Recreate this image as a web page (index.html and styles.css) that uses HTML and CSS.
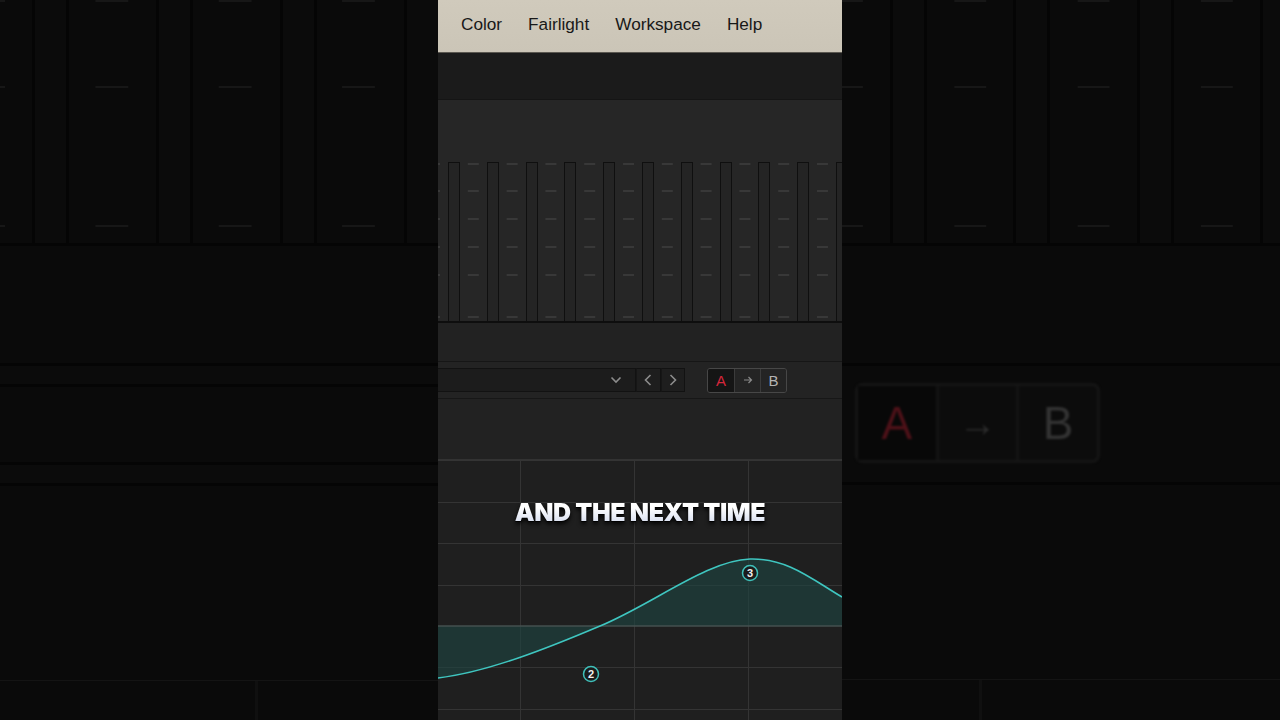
FILE: index.html
```html
<!DOCTYPE html>
<html lang="en">
<head>
    <meta charset="UTF-8">
    <meta name="viewport" content="width=device-width, initial-scale=1.0">
    <title>Fairlight EQ</title>
    <link rel="stylesheet" href="styles.css">
</head>
<body>
    <div class="screen">
        <!-- blurred backdrop, left -->
        <div class="side side-left">
            <div class="side-strips">
                <div class="big-strip"></div>
                <div class="big-strip"></div>
                <div class="big-strip"></div>
                <div class="big-strip"></div>
            </div>
            <div class="band band-tall"></div>
            <div class="band band-thin"></div>
            <div class="band band-mid"></div>
            <div class="band band-thin"></div>
            <div class="band band-rest"></div>
            <div class="side-foot"><div class="foot-cell"></div></div>
        </div>

        <div class="app">
            <nav class="menubar">
                <span>Color</span>
                <span>Fairlight</span>
                <span>Workspace</span>
                <span>Help</span>
            </nav>
            <div class="topstrip"></div>

            <div class="mixer">
                <div class="faders">
                    <div class="fader"></div>
                    <div class="fader"></div>
                    <div class="fader"></div>
                    <div class="fader"></div>
                    <div class="fader"></div>
                    <div class="fader"></div>
                    <div class="fader"></div>
                    <div class="fader"></div>
                    <div class="fader"></div>
                    <div class="fader"></div>
                    <div class="fader"></div>
                </div>
            </div>
            <div class="gap-row"></div>

            <div class="toolbar">
                <div class="preset">
                    <svg width="12" height="8" viewBox="0 0 12 8"><path d="M1.5 1.5 L6 6 L10.5 1.5" fill="none" stroke="#8c8c8c" stroke-width="1.6"/></svg>
                </div>
                <div class="navbtn">
                    <svg width="8" height="12" viewBox="0 0 8 12"><path d="M6.5 1 L1.5 6 L6.5 11" fill="none" stroke="#8c8c8c" stroke-width="1.6"/></svg>
                </div>
                <div class="navbtn">
                    <svg width="8" height="12" viewBox="0 0 8 12"><path d="M1.5 1 L6.5 6 L1.5 11" fill="none" stroke="#8c8c8c" stroke-width="1.6"/></svg>
                </div>
                <div class="ab">
                    <span class="ab-a">A</span>
                    <span class="ab-arrow">
                        <svg width="10" height="10" viewBox="0 0 10 10"><path d="M1 5 H8.5 M5.5 2 L8.5 5 L5.5 8" fill="none" stroke="#8a8a8a" stroke-width="1.2"/></svg>
                    </span>
                    <span class="ab-b">B</span>
                </div>
            </div>
            <div class="gap-row tall"></div>

            <div class="graph">
                <svg class="eq" width="404" height="260" viewBox="0 0 404 260">
                    <g stroke="#343434" stroke-width="1">
                        <line x1="0" y1="0.5" x2="404" y2="0.5"/>
                        <line x1="0" y1="42.5" x2="404" y2="42.5"/>
                        <line x1="0" y1="83.5" x2="404" y2="83.5"/>
                        <line x1="0" y1="125.5" x2="404" y2="125.5"/>
                        <line x1="0" y1="207.5" x2="404" y2="207.5"/>
                        <line x1="0" y1="249.5" x2="404" y2="249.5"/>
                        <line x1="82.5" y1="0" x2="82.5" y2="260"/>
                        <line x1="196.5" y1="0" x2="196.5" y2="260"/>
                        <line x1="310.5" y1="0" x2="310.5" y2="260"/>
                    </g>
                    <path d="M0 166 L0 218 C50 212 110 188 162 166 C215 144 270 100 312 99 C350 98 375 120 404 137 L404 166 Z" fill="#1e4643" fill-opacity="0.6"/>
                    <line x1="0" y1="166" x2="404" y2="166" stroke="#44504f" stroke-width="1.5"/>
                    <path d="M0 218 C50 212 110 188 162 166 C215 144 270 100 312 99 C350 98 375 120 404 137" fill="none" stroke="#3fc6c0" stroke-width="1.6"/>
                    <g class="node">
                        <circle cx="312" cy="113" r="7.5" fill="#1b1b1b" stroke="#3fc0ba" stroke-width="1.5"/>
                        <text x="312" y="117">3</text>
                    </g>
                    <g class="node">
                        <circle cx="153" cy="214" r="7.5" fill="#1b1b1b" stroke="#3fc0ba" stroke-width="1.5"/>
                        <text x="153" y="218">2</text>
                    </g>
                </svg>
                <div class="caption">AND THE NEXT TIME</div>
            </div>
        </div>

        <!-- blurred backdrop, right -->
        <div class="side side-right">
            <div class="side-strips">
                <div class="big-strip"></div>
                <div class="big-strip"></div>
                <div class="big-strip"></div>
                <div class="big-strip"></div>
            </div>
            <div class="band band-tall"></div>
            <div class="band band-ab">
                <div class="ghost-ab">
                    <span class="ghost-a">A</span>
                    <span class="ghost-arrow">→</span>
                    <span class="ghost-b">B</span>
                </div>
            </div>
            <div class="band band-rest"></div>
            <div class="side-foot"><div class="foot-cell"></div></div>
        </div>
    </div>
</body>
</html>
```

FILE: styles.css
```css
* {
    margin: 0;
    padding: 0;
    box-sizing: border-box;
}

body {
    background: #0a0a0a;
    font-family: 'Liberation Sans', Arial, sans-serif;
}

.screen {
    display: flex;
    width: 1280px;
    height: 720px;
    overflow: hidden;
    background: #0a0a0a;
}

/* backdrop sides */
.side {
    width: 438px;
    flex: none;
    display: flex;
    flex-direction: column;
    background: #0a0a0a;
    filter: blur(0.7px);
}

.side-strips {
    display: flex;
    gap: 87px;
    height: 246px;
    padding-left: 32px;
    border-bottom: 3px solid #050505;
    background-image:
        linear-gradient(to right, #171717 0 5px, transparent 5px 95px, #171717 95px 123.3px),
        linear-gradient(to right, #171717 0 5px, transparent 5px 95px, #171717 95px 123.3px),
        linear-gradient(to right, #171717 0 5px, transparent 5px 95px, #171717 95px 123.3px);
    background-size: 123.3px 2px;
    background-repeat: repeat-x;
    background-position: 0 0, 0 86px, 0 225px;
}

.side-right .side-strips {
    padding-left: 48px;
    gap: 86.3px;
    background-image:
        linear-gradient(to right, #171717 0 21px, transparent 21px 112px, #171717 112px 123.3px),
        linear-gradient(to right, #171717 0 21px, transparent 21px 112px, #171717 112px 123.3px),
        linear-gradient(to right, #171717 0 21px, transparent 21px 112px, #171717 112px 123.3px);
}

.big-strip {
    width: 37px;
    flex: none;
    border-left: 3px solid #050505;
    border-right: 3px solid #050505;
    background: #0b0b0b;
}

.band {
    border-bottom: 3px solid #050505;
}

.band-tall {
    height: 120px;
}

.band-thin {
    height: 21px;
    background: #0b0b0b;
}

.band-mid {
    height: 78px;
}

.band-rest {
    height: 195px;
    border-bottom: 1px solid #141414;
}

.band-ab {
    height: 119px;
    padding: 17px 0 0 13px;
}

.side-foot {
    flex: 1;
    background: #0a0a0a;
}

.side-left .foot-cell {
    width: 258px;
    height: 100%;
    border-right: 3px solid #101010;
}

.side-right .foot-cell {
    width: 140px;
    height: 100%;
    border-right: 3px solid #101010;
}

.ghost-ab {
    display: flex;
    width: 245px;
    height: 80px;
    border: 3px solid #151515;
    border-radius: 8px;
    background: #0c0c0c;
    filter: blur(1.2px);
}

.ghost-ab span {
    flex: 1;
    display: flex;
    align-items: center;
    justify-content: center;
    font-size: 46px;
    border-left: 3px solid #131313;
}

.ghost-ab .ghost-a {
    border-left: none;
    background: #080808;
    color: #4e1118;
}

.ghost-arrow {
    color: #2c2c2c;
    font-size: 38px !important;
}

.ghost-b {
    color: #333;
}

/* center app column */
.app {
    width: 404px;
    flex: none;
    display: flex;
    flex-direction: column;
    background: #222;
    position: relative;
}

.menubar {
    height: 53px;
    display: flex;
    align-items: center;
    gap: 26px;
    padding: 0 0 3px 23px;
    background: linear-gradient(180deg, #d0cabc, #cbc5b7);
    border-bottom: 1px solid #5a5750;
    font-size: 17.2px;
    color: #181818;
}

.topstrip {
    height: 47px;
    background: #1b1b1b;
    border-bottom: 1px solid #151515;
}

.mixer {
    height: 223px;
    padding-top: 62px;
    background: #262626;
}

.faders {
    display: flex;
    gap: 26.8px;
    height: 161px;
    padding-left: 10px;
    border-bottom: 2px solid #0e0e0e;
    background-image:
        linear-gradient(to right, #383838 0 2.2px, transparent 2.2px 30px, #383838 30px 38.8px),
        linear-gradient(to right, #383838 0 2.2px, transparent 2.2px 30px, #383838 30px 38.8px),
        linear-gradient(to right, #383838 0 2.2px, transparent 2.2px 30px, #383838 30px 38.8px),
        linear-gradient(to right, #383838 0 2.2px, transparent 2.2px 30px, #383838 30px 38.8px),
        linear-gradient(to right, #383838 0 2.2px, transparent 2.2px 30px, #383838 30px 38.8px),
        linear-gradient(to right, #383838 0 2.2px, transparent 2.2px 30px, #383838 30px 38.8px);
    background-size: 38.8px 2px;
    background-repeat: repeat-x;
    background-position: 0 1px, 0 28px, 0 56px, 0 84px, 0 112px, 0 154px;
}

.fader {
    width: 12px;
    flex: none;
    border: 1px solid #0f0f0f;
    border-bottom: none;
    background: #242424;
}

.gap-row {
    height: 39px;
    background: #222;
    border-bottom: 1px solid #161616;
}

.gap-row.tall {
    height: 61px;
    border-bottom: 1px solid #333;
}

.toolbar {
    height: 37px;
    display: flex;
    align-items: center;
    background: #232323;
    border-bottom: 1px solid #171717;
}

.preset {
    width: 198px;
    height: 24px;
    display: flex;
    align-items: center;
    justify-content: flex-end;
    padding-right: 13px;
    background: #1c1c1c;
    border: 1px solid #121212;
    border-left: none;
}

.navbtn {
    width: 24.5px;
    height: 24px;
    display: flex;
    align-items: center;
    justify-content: center;
    background: #1e1e1e;
    border: 1px solid #121212;
    border-left: 1px solid #161616;
}

.ab {
    display: flex;
    height: 25px;
    margin-left: 22px;
    border: 1px solid #474747;
    border-radius: 3px;
    overflow: hidden;
}

.ab span {
    width: 26px;
    display: flex;
    align-items: center;
    justify-content: center;
    font-size: 15px;
    border-left: 1px solid #3b3b3b;
    background: #242424;
}

.ab .ab-a {
    border-left: none;
    background: #151515;
    color: #d4263b;
}

.ab-b {
    color: #b4b4b4;
}

.graph {
    flex: 1;
    position: relative;
    background: #1f1f1f;
}

.eq {
    display: block;
}

.node text {
    font-family: 'Liberation Sans', Arial, sans-serif;
    font-size: 11px;
    font-weight: bold;
    fill: #f0f0f0;
    text-anchor: middle;
}

.caption {
    position: absolute;
    top: 37px;
    left: 0;
    right: 0;
    text-align: center;
    font-family: Inter, 'Liberation Sans', sans-serif;
    font-weight: 900;
    font-size: 25px;
    line-height: 30px;
    letter-spacing: -0.4px;
    color: transparent;
    background: linear-gradient(180deg, #ffffff 35%, #cdd6ec 100%);
    -webkit-background-clip: text;
    background-clip: text;
    filter: drop-shadow(0 1px 0 #000) drop-shadow(0 2px 2px rgba(0, 0, 0, 0.85));
}
```
